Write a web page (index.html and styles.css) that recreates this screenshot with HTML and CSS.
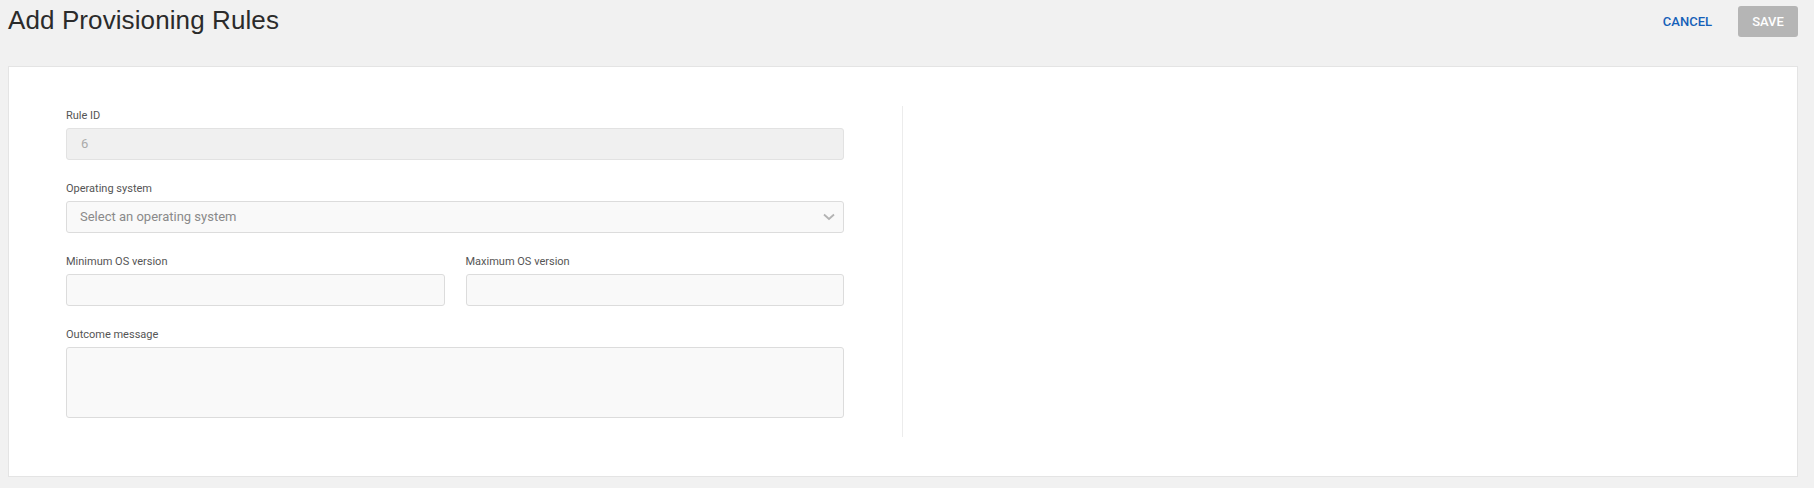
FILE: index.html
```html
<!DOCTYPE html>
<html lang="en">
<head>
<meta charset="utf-8">
<title>Add Provisioning Rules</title>
<link rel="stylesheet" href="styles.css">
</head>
<body>
<div class="page">
  <header class="header">
    <h1 class="title">Add Provisioning Rules</h1>
    <div class="actions">
      <button class="btn-cancel" type="button">CANCEL</button>
      <button class="btn-save" type="button" disabled>SAVE</button>
    </div>
  </header>
  <main class="card">
    <div class="form-col">
      <div class="group">
        <label class="label">Rule ID</label>
        <div class="input disabled">6</div>
      </div>
      <div class="group">
        <label class="label">Operating system</label>
        <div class="input select">
          <span class="placeholder">Select an operating system</span>
          <svg class="chevron" width="12" height="8" viewBox="0 0 12 8"><path d="M1 1.5 L6 6 L11 1.5" fill="none" stroke="#b3b3b3" stroke-width="1.8"/></svg>
        </div>
      </div>
      <div class="group row">
        <div class="cell">
          <label class="label">Minimum OS version</label>
          <div class="input"></div>
        </div>
        <div class="cell">
          <label class="label">Maximum OS version</label>
          <div class="input"></div>
        </div>
      </div>
      <div class="group last">
        <label class="label">Outcome message</label>
        <div class="input textarea"></div>
      </div>
    </div>
    <div class="side-col"></div>
  </main>
</div>
</body>
</html>
```
FILE: styles.css
```css
* { box-sizing: border-box; }
html, body { margin: 0; padding: 0; }
body {
  background: #f1f1f1;
  font-family: Roboto, "Liberation Sans", Arial, sans-serif;
  color: #333;
}
.page {
  padding: 0 16px 12px 8px;
}
.header {
  display: flex;
  justify-content: space-between;
  align-items: flex-start;
  height: 66px;
  padding-top: 5px;
}
.title {
  margin: 0;
  font-family: "Liberation Sans", Arial, sans-serif;
  font-weight: normal;
  font-size: 26px;
  line-height: 30px;
  letter-spacing: 0.1px;
  color: #2b2b2b;
}
.actions {
  display: flex;
  align-items: center;
  gap: 13px;
  margin-top: 1px;
}
.btn-cancel, .btn-save {
  font-family: Roboto, sans-serif;
  font-weight: 500;
  font-size: 13px;
  height: 31px;
  border: none;
  border-radius: 3px;
  cursor: pointer;
}
.btn-cancel {
  background: transparent;
  color: #1560b8;
  padding: 0 13px;
}
.btn-save {
  background: #b5b5b5;
  color: #fff;
  width: 60px;
  padding: 0;
}
.card {
  background: #fff;
  border: 1px solid #e4e4e4;
  display: flex;
  padding: 39px 0 39px 57px;
  height: 411px;
}
.form-col {
  width: 837px;
  padding: 2px 58px 18px 0;
  border-right: 1px solid #ececec;
}
.side-col { flex: 1; }
.group { margin-bottom: 21px; }
.group.last { margin-bottom: 0; }
.label {
  display: block;
  font-size: 11px;
  line-height: 16px;
  margin-bottom: 4px;
  color: #555;
}
.input {
  height: 32px;
  background: #f9f9f9;
  border: 1px solid #dcdcdc;
  border-radius: 3px;
  font-size: 13px;
  line-height: 30px;
  padding: 0 14px;
  color: #999;
}
.input.disabled {
  background: #f0f0f0;
  color: #aaa;
  border-color: #e2e2e2;
}
.select {
  display: flex;
  justify-content: space-between;
  align-items: center;
  padding: 0 8px 0 13px;
}
.placeholder { color: #8a8a8a; }
.chevron { display: block; margin-top: -1px; }
.row {
  display: grid;
  grid-template-columns: 1fr 1fr;
  column-gap: 21px;
}
.textarea { height: 71px; }
```
